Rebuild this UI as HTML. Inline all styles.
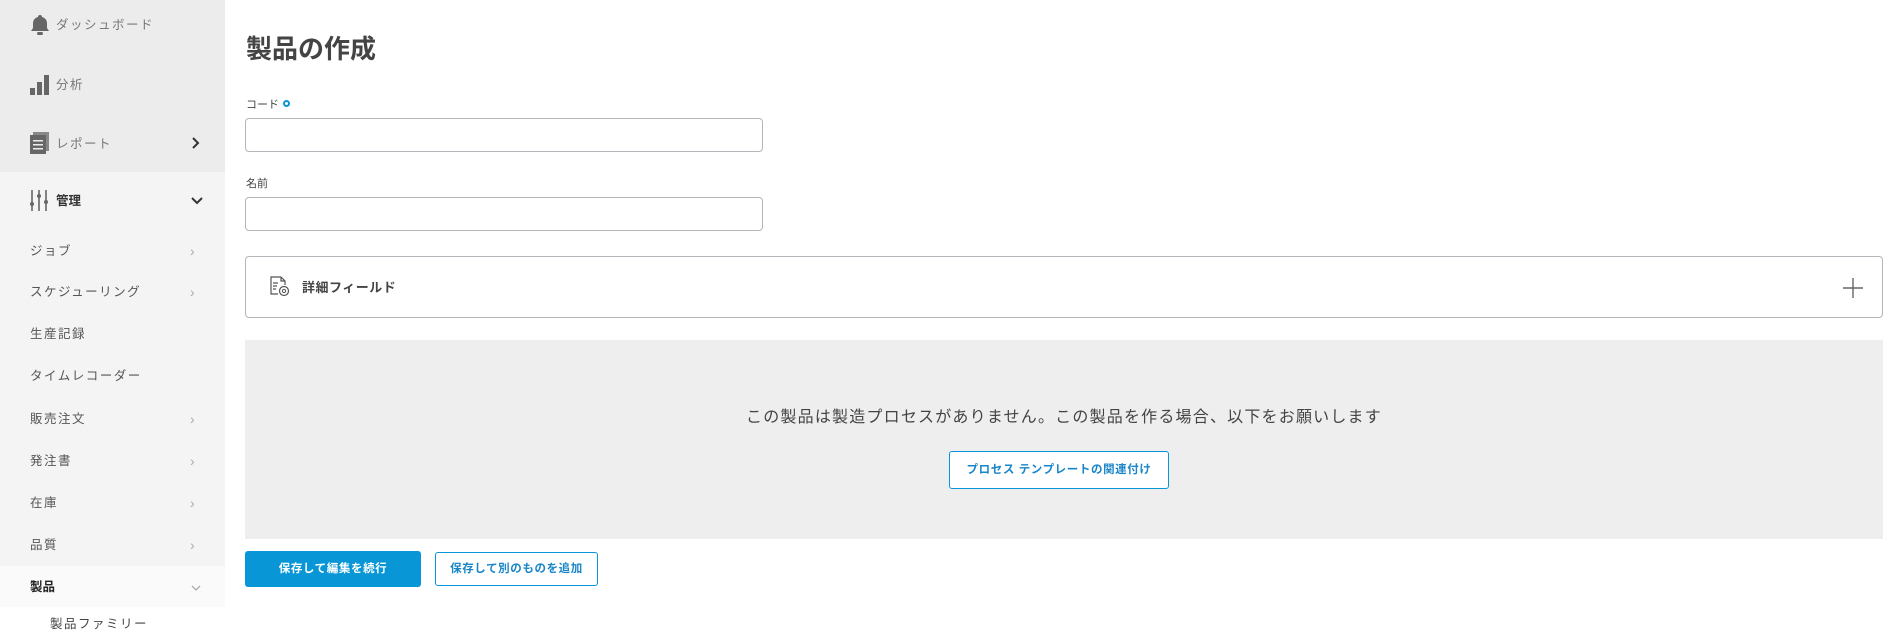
<!DOCTYPE html>
<html><head><meta charset="utf-8"><style>
*{box-sizing:border-box;margin:0;padding:0}
body{width:1903px;height:632px;overflow:hidden;background:#fff;font-family:"Liberation Sans","Noto Sans CJK JP",sans-serif;color:#444;position:relative}
.sb{position:absolute;left:0;top:0;width:225px;height:632px;background:#f4f4f4}
.sbtop{position:absolute;left:0;top:0;width:225px;height:172px;background:#ececec}
.it{position:absolute;left:30px;font-size:12.5px;color:#555;letter-spacing:1.5px;line-height:16px}
.chev{position:absolute;left:190px;font-size:14px;color:#aaa;line-height:16px}
.ic{position:absolute;left:30px}
.abs{position:absolute}
.lbl{position:absolute;left:246px;font-size:11px;color:#444}
.inp{position:absolute;left:245px;width:518px;height:34px;border:1px solid #b4b4ba;border-radius:4px;background:#fff}
</style></head><body>
<div class="sb"></div><div class="sbtop"></div>
<div class="abs" style="left:0;top:566px;width:225px;height:41px;background:#fafafa"></div>
<div class="abs" style="left:0;top:607px;width:225px;height:25px;background:#fff"></div>

<svg class="ic" style="top:14px" width="20" height="22" viewBox="0 0 20 22"><path d="M10 1a2 2 0 0 1 2 2 6 6 0 0 1 5 6v5l2 3H1l2-3V9a6 6 0 0 1 5-6 2 2 0 0 1 2-2z" fill="#666"/><rect x="7" y="18" width="6" height="3" rx="1.5" fill="#666"/></svg>
<div class="it" style="left:56px;top:17px;color:#777">ダッシュボード</div>
<svg class="ic" style="top:74px" width="20" height="22"><rect x="0" y="14" width="5" height="7" fill="#666"/><rect x="7" y="8" width="5" height="13" fill="#666"/><rect x="14" y="1" width="5" height="20" fill="#666"/></svg>
<div class="it" style="left:56px;top:77px;color:#777">分析</div>
<svg class="ic" style="top:132px" width="20" height="22"><rect x="3" y="0" width="16" height="19" fill="#888"/><rect x="0" y="3" width="16" height="19" fill="#666"/><rect x="3" y="8" width="10" height="1.5" fill="#ececec"/><rect x="3" y="12" width="10" height="1.5" fill="#ececec"/><rect x="3" y="16" width="10" height="1.5" fill="#ececec"/></svg>
<div class="it" style="left:56px;top:136px;color:#777">レポート</div>
<svg class="abs" style="left:191px;top:137px" width="10" height="12"><path d="M2 1l5 5-5 5" stroke="#333" stroke-width="2" fill="none"/></svg>

<svg class="ic" style="top:190px" width="20" height="22"><g stroke="#666" stroke-width="1.6"><path d="M2 0v21M9 0v21M16 0v21"/></g><circle cx="2" cy="14" r="2" fill="#666"/><circle cx="9" cy="6" r="2" fill="#666"/><circle cx="16" cy="12" r="2" fill="#666"/></svg>
<div class="it" style="left:56px;top:193px;color:#333;font-weight:bold;letter-spacing:0">管理</div>
<svg class="abs" style="left:191px;top:196px" width="12" height="10"><path d="M1 2l5 5 5-5" stroke="#333" stroke-width="2" fill="none"/></svg>

<div class="it" style="top:243px">ジョブ</div><div class="chev" style="top:243px">›</div>
<div class="it" style="top:284px">スケジューリング</div><div class="chev" style="top:284px">›</div>
<div class="it" style="top:326px">生産記録</div>
<div class="it" style="top:368px">タイムレコーダー</div>
<div class="it" style="top:411px">販売注文</div><div class="chev" style="top:411px">›</div>
<div class="it" style="top:453px">発注書</div><div class="chev" style="top:453px">›</div>
<div class="it" style="top:495px">在庫</div><div class="chev" style="top:495px">›</div>
<div class="it" style="top:537px">品質</div><div class="chev" style="top:537px">›</div>
<div class="it" style="top:579px;color:#222;font-weight:bold;letter-spacing:0">製品</div>
<svg class="abs" style="left:191px;top:584px" width="10" height="8"><path d="M1 2l4 4 4-4" stroke="#aaa" stroke-width="1.3" fill="none"/></svg>
<div class="it" style="left:50px;top:616px;color:#444">製品ファミリー</div>

<div class="abs" style="left:246px;top:32px;font-size:26px;font-weight:bold;color:#444;line-height:34px">製品の作成</div>
<div class="lbl" style="top:96px">コード</div>
<div class="abs" style="left:283px;top:100px;width:7px;height:7px;border:2px solid #0896d6;border-radius:50%"></div>
<div class="inp" style="top:118px"></div>
<div class="lbl" style="top:175px">名前</div>
<div class="inp" style="top:197px"></div>

<div class="abs" style="left:245px;top:256px;width:1638px;height:62px;border:1px solid #b4b4ba;border-radius:4px"></div>
<svg class="abs" style="left:269px;top:276px" width="22" height="22" viewBox="0 0 22 22"><path d="M12 1H2v17h7M12 1l4 4v4M12 1v4h4" stroke="#555" stroke-width="1.2" fill="none"/><path d="M4 7h5M4 10h4M4 13h3" stroke="#555" stroke-width="1.2"/><circle cx="15" cy="15" r="4.5" stroke="#555" stroke-width="1.2" fill="none"/><circle cx="15" cy="15" r="1.6" stroke="#555" stroke-width="1" fill="none"/></svg>
<div class="abs" style="left:302px;top:277px;font-size:13px;font-weight:bold;color:#444;letter-spacing:.5px">詳細フィールド</div>
<svg class="abs" style="left:1843px;top:278px" width="20" height="20"><path d="M10 0v20M0 10h20" stroke="#666" stroke-width="1.4"/></svg>

<div class="abs" style="left:245px;top:340px;width:1638px;height:199px;background:#eeeeee"></div>
<div class="abs" style="left:245px;top:403px;width:1638px;text-align:center;font-size:16px;color:#444;letter-spacing:1.2px">この製品は製造プロセスがありません。この製品を作る場合、以下をお願いします</div>
<div class="abs" style="left:949px;top:451px;width:220px;height:38px;border:1px solid #0896d6;border-radius:3px;background:#fff;color:#1a86c8;font-size:11.5px;font-weight:bold;text-align:center;line-height:36px;letter-spacing:.6px">プロセス テンプレートの関連付け</div>

<div class="abs" style="left:245px;top:551px;width:176px;height:36px;background:#0896d6;border-radius:3px;color:#fff;font-size:11.5px;font-weight:bold;text-align:center;line-height:36px;letter-spacing:.6px">保存して編集を続行</div>
<div class="abs" style="left:435px;top:552px;width:163px;height:34px;border:1px solid #0896d6;border-radius:3px;color:#1a86c8;font-size:11.5px;font-weight:bold;text-align:center;line-height:32px;letter-spacing:.6px">保存して別のものを追加</div>
</body></html>
